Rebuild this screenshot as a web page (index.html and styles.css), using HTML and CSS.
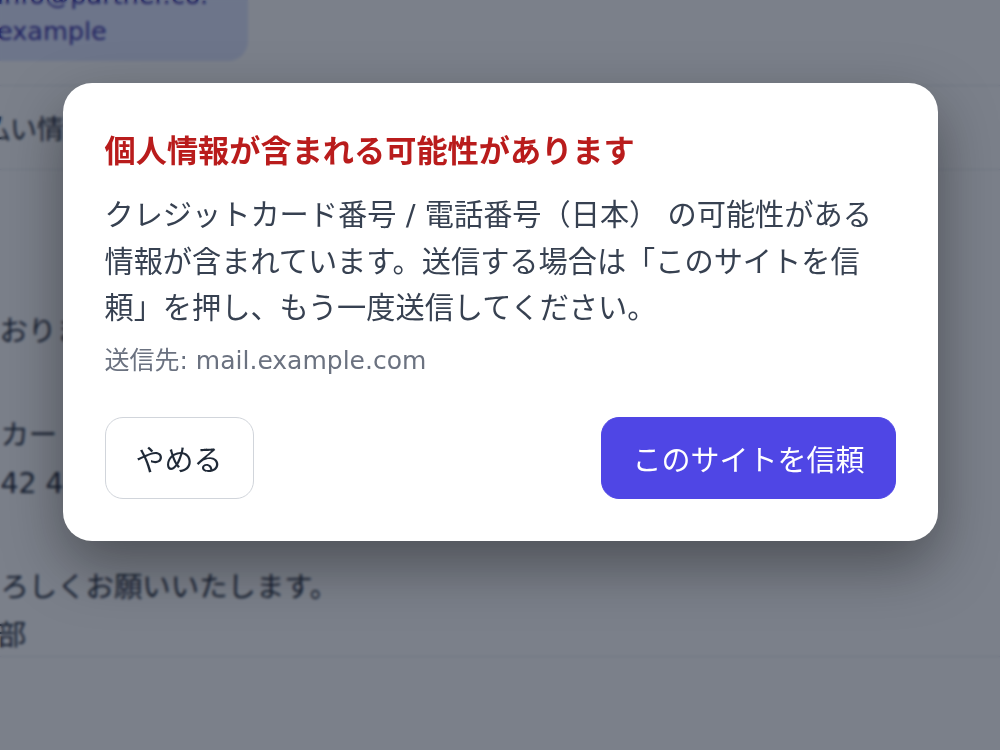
FILE: index.html
```html
<html>
  <head>
    <meta charset="utf-8">
    <link rel="stylesheet" href="styles.css">
  </head>
  <body>
    <!-- メール作成画面（モーダルの後ろ） -->
    <div class="composer">
        <div class="to-row">
            <span class="chip">info@partner.co.<wbr>example</span>
        </div>
        <div class="subject-row">支払い情報の更新について</div>
        <div class="mail-body">
            <p>ております。</p>
            <p>【カード番号】<br>：42 4242 4242 4242</p>
            <p>よろしくお願いいたします。<br>IT部</p>
        </div>
        <div class="composer-footer"></div>
    </div>

    <!-- 送信前の確認モーダル -->
    <div class="overlay">
        <div class="modal">
            <h2 class="modal-title">個人情報が含まれる可能性があります</h2>
            <p class="modal-text">クレジットカード番号 / 電話番号（日本） の可能性がある情報が含まれています。送信する場合は「このサイトを信頼」を押し、もう一度送信してください。</p>
            <p class="modal-dest">送信先: mail.example.com</p>
            <div class="modal-actions">
                <button class="btn btn-cancel">やめる</button>
                <button class="btn btn-trust">このサイトを信頼</button>
            </div>
        </div>
    </div>
  </body>
</html>
```

FILE: styles.css
```css
* {
  margin: 0;
  padding: 0;
  box-sizing: border-box;
}
body {
    background-color: #fff;
    font-family: "DejaVu Sans", "Noto Sans CJK JP", sans-serif;
    color: #1f2937;
    overflow: hidden;
}
/* 後ろの作成画面（スクロール途中の位置） */
.composer {
    margin-top: -59px;
    margin-left: -44px;
}
.to-row {
    padding: 24px 0 24px 19px;
    border-bottom: 1px solid #e5e7eb;
}
.chip {
    display: inline-block;
    max-width: 273px;
    padding: 12px 22px;
    border-radius: 20px;
    background-color: #e0e7ff;
    color: #3730a3;
    font-size: 25.5px;
    line-height: 36px;
}
.subject-row {
    height: 84px;
    display: flex;
    align-items: center;
    border-bottom: 1px solid #e5e7eb;
    font-size: 27px;
}
.mail-body {
    height: 486px;
    padding: 138px 0 0 16px;
    font-size: 28.4px;
    line-height: 48px;
}
.mail-body p {
    margin-bottom: 56px;
}
.composer-footer {
    height: 120px;
    border-top: 1px solid #e5e7eb;
}
/* モーダル */
.overlay {
    position: fixed;
    top: 0;
    left: 0;
    right: 0;
    bottom: 0;
    background-color: rgba(15, 23, 42, 0.55);
    backdrop-filter: blur(1.5px);
    display: flex;
    justify-content: center;
    align-items: flex-start;
    padding-top: 83px;
}
.modal {
    width: 875px;
    padding: 46px 42px 42px;
    background-color: #fff;
    border-radius: 29px;
    box-shadow: 0 24px 60px rgba(0, 0, 0, 0.38);
}
.modal-title {
    font-size: 31.2px;
    line-height: 45px;
    font-weight: bold;
    color: #b91c1c;
    margin-bottom: 18px;
}
.modal-text {
    font-size: 29.2px;
    line-height: 46.7px;
    color: #374151;
}
.modal-dest {
    margin-top: 10px;
    font-size: 25px;
    line-height: 37px;
    color: #6b7280;
}
.modal-actions {
    display: flex;
    justify-content: space-between;
    margin-top: 38px;
}
.btn {
    height: 82px;
    padding: 0 30px;
    border-radius: 18px;
    border: 1.5px solid #d1d5db;
    font-family: inherit;
    font-size: 29px;
    background-color: #fff;
    color: #1f2937;
}
.btn-trust {
    background-color: #4f46e5;
    border-color: #4f46e5;
    color: #fff;
}
```
